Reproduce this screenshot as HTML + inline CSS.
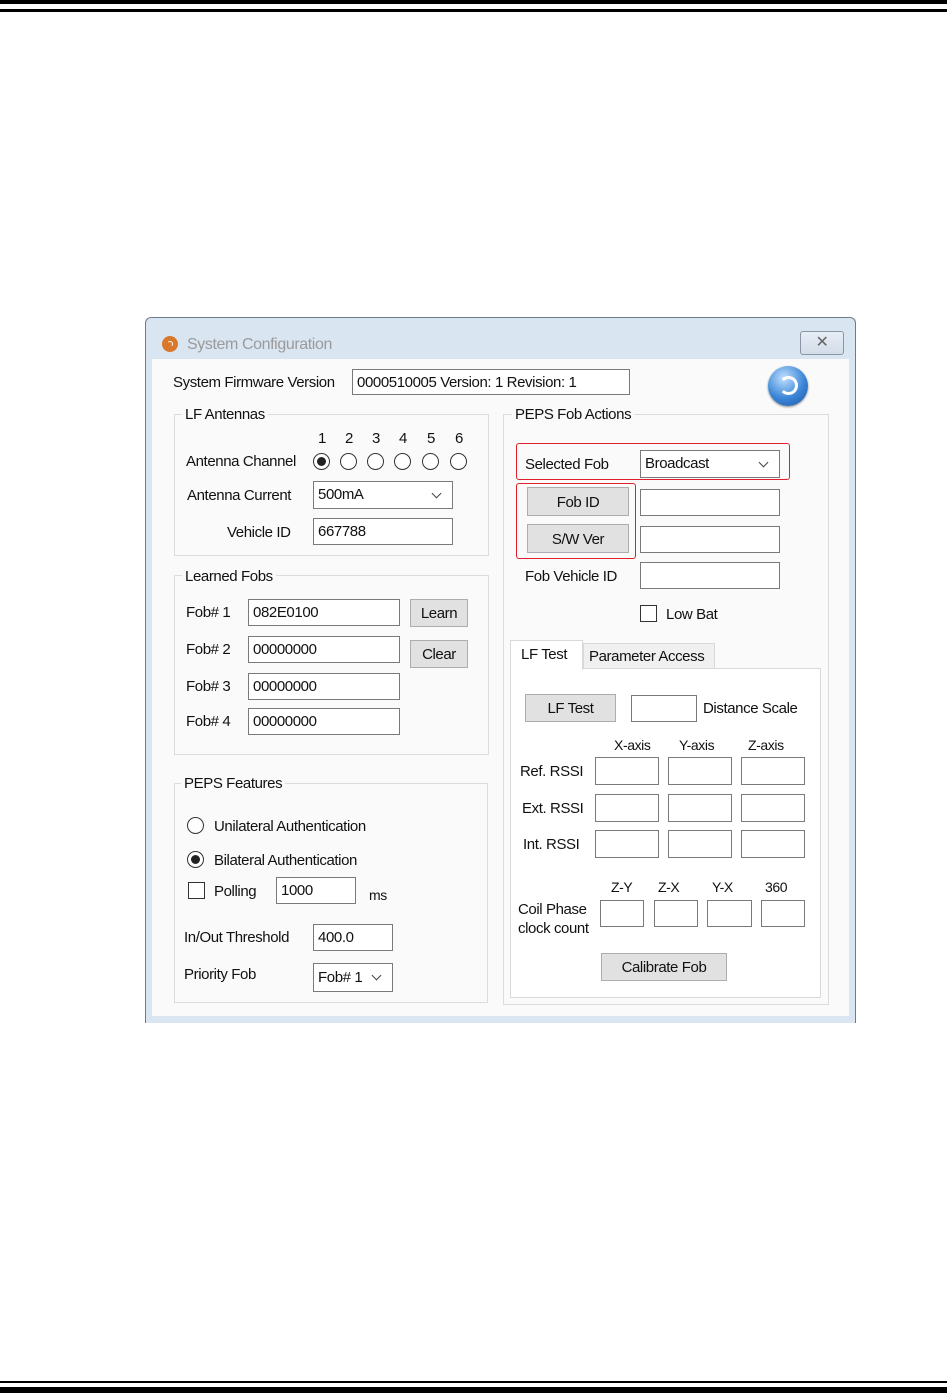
<!DOCTYPE html>
<html><head><meta charset="utf-8"><style>
*{margin:0;padding:0;box-sizing:border-box}
body{width:947px;height:1393px;background:#fff;position:relative;overflow:hidden;font-family:"Liberation Sans",sans-serif;font-size:15px;color:#111;letter-spacing:-0.4px}
.a{position:absolute}
.t{position:absolute;line-height:18px;white-space:nowrap;transform:translateY(-8px)}
.box{position:absolute;border:1px solid #7a7a7a;background:#fff;padding-left:4px;line-height:26px}
.btn{position:absolute;border:1px solid #adadad;background:#e1e1e1;text-align:center}
.grp{position:absolute;border:1px solid #dcdcdc}
.gl{position:absolute;background:#fafafa;padding:0 3px;line-height:18px;transform:translateY(-8px)}
.rad{position:absolute;width:17px;height:17px;border:1px solid #333;border-radius:50%;background:#fff}
.rad.on::after{content:"";position:absolute;left:3px;top:3px;width:9px;height:9px;border-radius:50%;background:#222}
.chk{position:absolute;width:17px;height:17px;border:1px solid #333;background:#fff}
.dd::after{content:"";position:absolute;right:12px;top:8px;width:6px;height:6px;border-right:1px solid #444;border-bottom:1px solid #444;transform:rotate(45deg)}
.red{position:absolute;border:1px solid #e0202a;border-radius:3px}
</style></head><body>
<div class="a" style="left:0;top:0;width:947px;height:4px;background:#000"></div>
<div class="a" style="left:0;top:9px;width:947px;height:3px;background:#000"></div>
<div class="a" style="left:0;top:1381px;width:947px;height:2px;background:#000"></div>
<div class="a" style="left:0;top:1387px;width:947px;height:6px;background:#000"></div>

<div class="a" style="left:145px;top:317px;width:711px;height:706px;background:#dae5f2;border:1px solid #6f7b8a;border-bottom:none;border-radius:6px 6px 0 0"></div>
<div class="a" style="left:152px;top:359px;width:697px;height:657px;background:#fafafa"></div>
<div class="a" style="left:162px;top:336px;width:16px;height:16px;border-radius:50%;background:#d9772a"></div>
<div class="a" style="left:167px;top:341px;width:6px;height:6px;border-radius:50%;border:1.5px solid #fff;border-left-color:transparent;border-bottom-color:transparent"></div>
<div class="t" style="left:187px;top:344px;font-size:16px;color:#9a9a9a">System Configuration</div>
<div class="a" style="left:800px;top:331px;width:44px;height:24px;border:1px solid #8a96a6;border-radius:3px;background:linear-gradient(#e8eef6,#d3dce8);text-align:center;font-size:16px;line-height:22px;color:#666">✕</div>

<div class="t" style="left:173px;top:382px">System Firmware Version</div>
<div class="box" style="left:352px;top:369px;width:278px;height:26px;line-height:25px">0000510005 Version: 1 Revision: 1</div>
<div class="a" style="left:768px;top:366px;width:40px;height:40px;border-radius:50%;background:radial-gradient(circle at 40% 30%,#bfe0ff,#3b86d6 55%,#1a56a8);box-shadow:0 1px 2px #888"></div>
<div class="a" style="left:779px;top:376px;width:19px;height:19px;border-radius:50%;border:3px solid #fff;border-left-color:transparent"></div>

<div class="grp" style="left:174px;top:414px;width:315px;height:142px"></div>
<div class="gl" style="left:182px;top:414px">LF Antennas</div>
<div class="t" style="left:318px;top:438px">1</div><div class="t" style="left:345px;top:438px">2</div><div class="t" style="left:372px;top:438px">3</div><div class="t" style="left:399px;top:438px">4</div><div class="t" style="left:427px;top:438px">5</div><div class="t" style="left:455px;top:438px">6</div>
<div class="t" style="left:186px;top:461px">Antenna Channel</div>
<div class="rad on" style="left:313px;top:453px"></div><div class="rad" style="left:340px;top:453px"></div><div class="rad" style="left:367px;top:453px"></div><div class="rad" style="left:394px;top:453px"></div><div class="rad" style="left:422px;top:453px"></div><div class="rad" style="left:450px;top:453px"></div>
<div class="t" style="left:187px;top:495px">Antenna Current</div>
<div class="box dd" style="left:313px;top:481px;width:140px;height:28px">500mA</div>
<div class="t" style="left:227px;top:532px">Vehicle ID</div>
<div class="box" style="left:313px;top:518px;width:140px;height:27px">667788</div>

<div class="grp" style="left:174px;top:575px;width:315px;height:180px"></div>
<div class="gl" style="left:182px;top:576px">Learned Fobs</div>
<div class="t" style="left:186px;top:612px">Fob# 1</div><div class="box" style="left:248px;top:599px;width:152px;height:27px">082E0100</div>
<div class="t" style="left:186px;top:649px">Fob# 2</div><div class="box" style="left:248px;top:636px;width:152px;height:27px">00000000</div>
<div class="t" style="left:186px;top:686px">Fob# 3</div><div class="box" style="left:248px;top:673px;width:152px;height:27px">00000000</div>
<div class="t" style="left:186px;top:721px">Fob# 4</div><div class="box" style="left:248px;top:708px;width:152px;height:27px">00000000</div>
<div class="btn" style="left:410px;top:599px;width:58px;height:28px;line-height:28px">Learn</div>
<div class="btn" style="left:410px;top:640px;width:58px;height:28px;line-height:28px">Clear</div>

<div class="grp" style="left:174px;top:783px;width:314px;height:220px"></div>
<div class="gl" style="left:181px;top:783px">PEPS Features</div>
<div class="rad" style="left:187px;top:817px"></div><div class="t" style="left:214px;top:826px">Unilateral Authentication</div>
<div class="rad on" style="left:187px;top:851px"></div><div class="t" style="left:214px;top:860px">Bilateral Authentication</div>
<div class="chk" style="left:188px;top:882px"></div><div class="t" style="left:214px;top:891px">Polling</div>
<div class="box" style="left:276px;top:877px;width:80px;height:27px">1000</div>
<div class="t" style="left:369px;top:894px;font-size:14px">ms</div>
<div class="t" style="left:184px;top:937px">In/Out Threshold</div>
<div class="box" style="left:313px;top:924px;width:80px;height:27px">400.0</div>
<div class="t" style="left:184px;top:974px">Priority Fob</div>
<div class="box dd" style="left:313px;top:963px;width:80px;height:29px;line-height:28px">Fob# 1</div>

<div class="grp" style="left:503px;top:414px;width:326px;height:591px"></div>
<div class="gl" style="left:512px;top:414px">PEPS Fob Actions</div>
<div class="red" style="left:516px;top:443px;width:274px;height:37px"></div>
<div class="t" style="left:525px;top:464px">Selected Fob</div>
<div class="box dd" style="left:640px;top:450px;width:140px;height:28px">Broadcast</div>
<div class="red" style="left:516px;top:483px;width:120px;height:76px"></div>
<div class="btn" style="left:527px;top:487px;width:102px;height:29px;line-height:29px">Fob ID</div>
<div class="btn" style="left:527px;top:524px;width:102px;height:29px;line-height:29px">S/W Ver</div>
<div class="box" style="left:640px;top:489px;width:140px;height:27px"></div>
<div class="box" style="left:640px;top:526px;width:140px;height:27px"></div>
<div class="t" style="left:525px;top:576px">Fob Vehicle ID</div>
<div class="box" style="left:640px;top:562px;width:140px;height:27px"></div>
<div class="chk" style="left:640px;top:605px"></div><div class="t" style="left:666px;top:614px">Low Bat</div>

<div class="a" style="left:510px;top:668px;width:311px;height:330px;border:1px solid #d9d9d9;background:#fff"></div>
<div class="a" style="left:583px;top:643px;width:132px;height:26px;border:1px solid #d9d9d9;background:#f0f0f0"></div>
<div class="t" style="left:589px;top:656px">Parameter Access</div>
<div class="a" style="left:510px;top:640px;width:73px;height:30px;border:1px solid #d9d9d9;border-bottom:none;background:#fff"></div>
<div class="t" style="left:521px;top:654px">LF Test</div>
<div class="btn" style="left:525px;top:694px;width:91px;height:28px;line-height:28px">LF Test</div>
<div class="box" style="left:631px;top:695px;width:66px;height:27px"></div>
<div class="t" style="left:703px;top:708px">Distance Scale</div>
<div class="t" style="left:614px;top:744px;font-size:14px">X-axis</div>
<div class="t" style="left:679px;top:744px;font-size:14px">Y-axis</div>
<div class="t" style="left:748px;top:744px;font-size:14px">Z-axis</div>
<div class="t" style="left:520px;top:771px">Ref. RSSI</div>
<div class="t" style="left:522px;top:808px">Ext. RSSI</div>
<div class="t" style="left:523px;top:844px">Int. RSSI</div>
<div class="box" style="left:595px;top:757px;width:64px;height:28px"></div><div class="box" style="left:668px;top:757px;width:64px;height:28px"></div><div class="box" style="left:741px;top:757px;width:64px;height:28px"></div>
<div class="box" style="left:595px;top:794px;width:64px;height:28px"></div><div class="box" style="left:668px;top:794px;width:64px;height:28px"></div><div class="box" style="left:741px;top:794px;width:64px;height:28px"></div>
<div class="box" style="left:595px;top:830px;width:64px;height:28px"></div><div class="box" style="left:668px;top:830px;width:64px;height:28px"></div><div class="box" style="left:741px;top:830px;width:64px;height:28px"></div>
<div class="t" style="left:611px;top:886px;font-size:14px">Z-Y</div>
<div class="t" style="left:658px;top:886px;font-size:14px">Z-X</div>
<div class="t" style="left:712px;top:886px;font-size:14px">Y-X</div>
<div class="t" style="left:765px;top:886px;font-size:14px">360</div>
<div class="t" style="left:518px;top:909px">Coil Phase</div>
<div class="t" style="left:518px;top:928px">clock count</div>
<div class="box" style="left:600px;top:900px;width:44px;height:27px"></div><div class="box" style="left:654px;top:900px;width:44px;height:27px"></div><div class="box" style="left:707px;top:900px;width:45px;height:27px"></div><div class="box" style="left:761px;top:900px;width:44px;height:27px"></div>
<div class="btn" style="left:601px;top:953px;width:126px;height:28px;line-height:28px">Calibrate Fob</div>
</body></html>
